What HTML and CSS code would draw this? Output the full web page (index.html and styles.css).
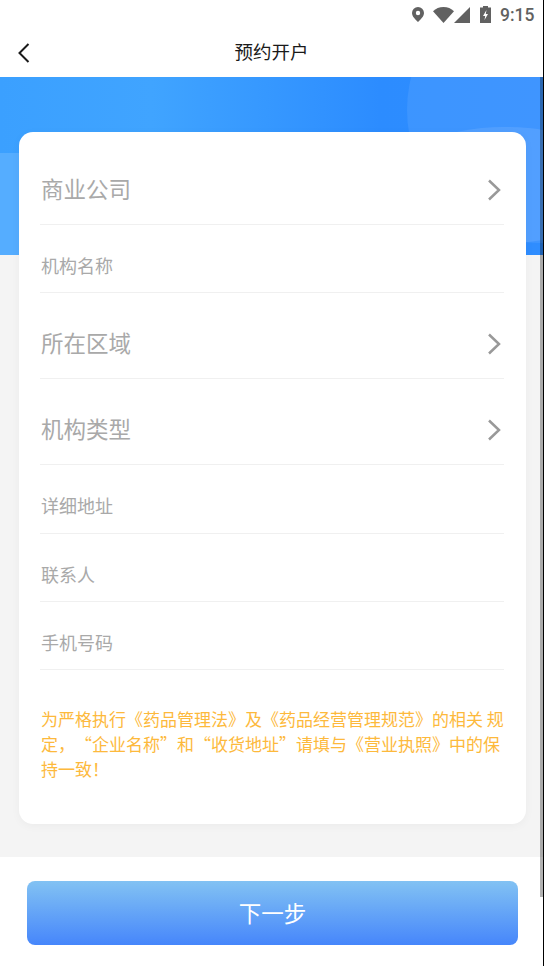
FILE: index.html
```html
<!DOCTYPE html>
<html lang="zh-CN">
  <head>
    <meta charset="UTF-8" />
    <meta name="viewport" content="width=device-width, initial-scale=1.0" />
    <title>预约开户</title>
    <link rel="stylesheet" href="styles.css">
  </head>
  <body>
    <div class="phone">
      <!-- 状态栏 -->
      <div class="status-bar">
        <svg class="icon-pin" viewBox="0 0 12 15"><path d="M6 0a6 6 0 0 0-6 6c0 3.600 4 7 6 9 2-2 6-5.400 6-9a6 6 0 0 0-6-6zm0 8.200a2.200 2.200 0 1 1 0-4.400 2.200 2.200 0 0 1 0 4.400z"/></svg>
        <svg class="icon-wifi" viewBox="0 0 21 16"><path d="M10.500 16 0 4.200C2.800 1.600 6.400 0 10.500 0S18.200 1.600 21 4.200z"/></svg>
        <svg class="icon-signal" viewBox="0 0 16 16"><path d="M16 0v16H0z"/></svg>
        <svg class="icon-battery" viewBox="0 0 11 17"><path d="M3 0h5v1.500h3V17H0V1.500h3z"/><path class="bolt" d="M6.500 4 3 10h2.200l-.7 4L8 8H5.800z"/></svg>
        <span class="time">9:15</span>
      </div>

      <!-- 标题栏 -->
      <div class="title-bar">
        <svg class="icon-back" viewBox="0 0 12 20"><path d="M10.500 1 1.500 10l9 9"/></svg>
        <span class="title">预约开户</span>
      </div>

      <div class="content">
        <!-- 蓝色背景 -->
        <div class="hero">
          <div class="hero-rect"></div>
          <div class="hero-circle"></div>
          <div class="hero-oval"></div>
        </div>

        <!-- 表单 -->
        <div class="card">
          <div class="row row-select"><span>商业公司</span><svg class="icon-arrow" viewBox="0 0 14 22"><path d="M2 1.500 12 11 2 20.500"/></svg></div>
          <div class="row">机构名称</div>
          <div class="row row-select"><span>所在区域</span><svg class="icon-arrow" viewBox="0 0 14 22"><path d="M2 1.500 12 11 2 20.500"/></svg></div>
          <div class="row row-select"><span>机构类型</span><svg class="icon-arrow" viewBox="0 0 14 22"><path d="M2 1.500 12 11 2 20.500"/></svg></div>
          <div class="row">详细地址</div>
          <div class="row">联系人</div>
          <div class="row">手机号码</div>
          <p class="notice">为严格执行《药品管理法》及《药品经营管理规范》的相关 规定，“企业名称”和“收货地址”请填与《营业执照》中的保持一致！</p>
        </div>
      </div>

      <!-- 底部按钮 -->
      <div class="footer">
        <div class="next-btn">下一步</div>
      </div>

      <div class="scrollbar"></div>
    </div>
  </body>
</html>
```

FILE: styles.css
```css
* {
  margin: 0;
  padding: 0;
  box-sizing: border-box;
}

body {
  background: #000;
  font-family: "Noto Sans CJK SC", "Liberation Sans", sans-serif;
  text-spacing-trim: space-all;
  overflow: hidden;
}

.phone {
  position: relative;
  width: 543px;
  height: 966px;
  display: flex;
  flex-direction: column;
  background: #fff;
  overflow: hidden;
}

/* 状态栏 */
.status-bar {
  height: 29px;
  display: flex;
  align-items: center;
  padding-left: 412px;
  fill: #616161;
}

.icon-pin {
  width: 12px;
  height: 15px;
}

.icon-wifi {
  width: 21px;
  height: 16px;
  margin-left: 9px;
}

.icon-signal {
  width: 16px;
  height: 16px;
}

.icon-battery {
  width: 11px;
  height: 17px;
  margin-left: 10px;
}

.icon-battery .bolt {
  fill: #fff;
}

.time {
  margin-left: 9px;
  font-family: Roboto, "Liberation Sans", sans-serif;
  font-size: 17.500px;
  font-weight: 500;
  color: #616161;
}

/* 标题栏 */
.title-bar {
  position: relative;
  height: 48px;
  padding-bottom: 4px;
  display: flex;
  align-items: center;
  justify-content: center;
}

.title {
  font-size: 18.500px;
  color: #1a1a1a;
}

.icon-back {
  position: absolute;
  left: 18px;
  top: 14px;
  width: 12px;
  height: 20px;
  fill: none;
  stroke: #1a1a1a;
  stroke-width: 2;
}

/* 内容区 */
.content {
  position: relative;
  flex: 1;
  padding: 55px 17px 0 19px;
  background: #f4f4f4;
}

.hero {
  position: absolute;
  top: 0;
  left: 0;
  right: 0;
  height: 178px;
  overflow: hidden;
  background: linear-gradient(90deg, #3ba0ff 0%, #40a4ff 28%, #2c8cff 70%, #2f8dff 100%);
}

.hero-rect {
  position: absolute;
  left: 0;
  top: 76px;
  width: 120px;
  height: 102px;
  background: #55adff;
}

.hero-circle {
  position: absolute;
  left: 407px;
  top: -100px;
  width: 266px;
  height: 266px;
  border-radius: 50%;
  background: rgba(255, 255, 255, 0.08);
}

.hero-oval {
  position: absolute;
  left: 385px;
  top: 50px;
  width: 240px;
  height: 116px;
  border-radius: 50%;
  background: rgba(255, 255, 255, 0.1);
}

.card {
  position: relative;
  width: 507px;
  height: 692px;
  padding: 7px 22px 0 21px;
  background: #fff;
  border-radius: 14px;
  box-shadow: 0 2px 10px rgba(0, 0, 0, 0.04);
}

.row {
  height: 68.300px;
  padding: 28px 0 0 1px;
  border-bottom: 1px solid #f0f0f0;
  font-size: 18px;
  line-height: 24px;
  color: #a9a9a9;
}

.row-select {
  height: 86px;
  padding-top: 34px;
  display: flex;
  justify-content: space-between;
  font-size: 22.500px;
  line-height: 30px;
}

.icon-arrow {
  width: 14px;
  height: 22px;
  margin: 6px 3px 0 0;
  fill: none;
  stroke: #999;
  stroke-width: 2.500;
}

.notice {
  padding: 36px 0 0 1px;
  font-size: 17px;
  line-height: 25px;
  color: #fdb93c;
}

/* 底部按钮 */
.footer {
  height: 109px;
  padding: 24px 25px 21px 27px;
  background: #fff;
}

.next-btn {
  height: 64px;
  padding-bottom: 3px;
  display: flex;
  align-items: center;
  justify-content: center;
  border-radius: 8px;
  background: linear-gradient(180deg, #82c2f3, #4686fb);
  font-size: 22.500px;
  color: #fff;
}

.scrollbar {
  position: absolute;
  right: 0;
  top: 77px;
  width: 3px;
  height: 820px;
  background: rgba(0, 0, 0, 0.3);
}
```
